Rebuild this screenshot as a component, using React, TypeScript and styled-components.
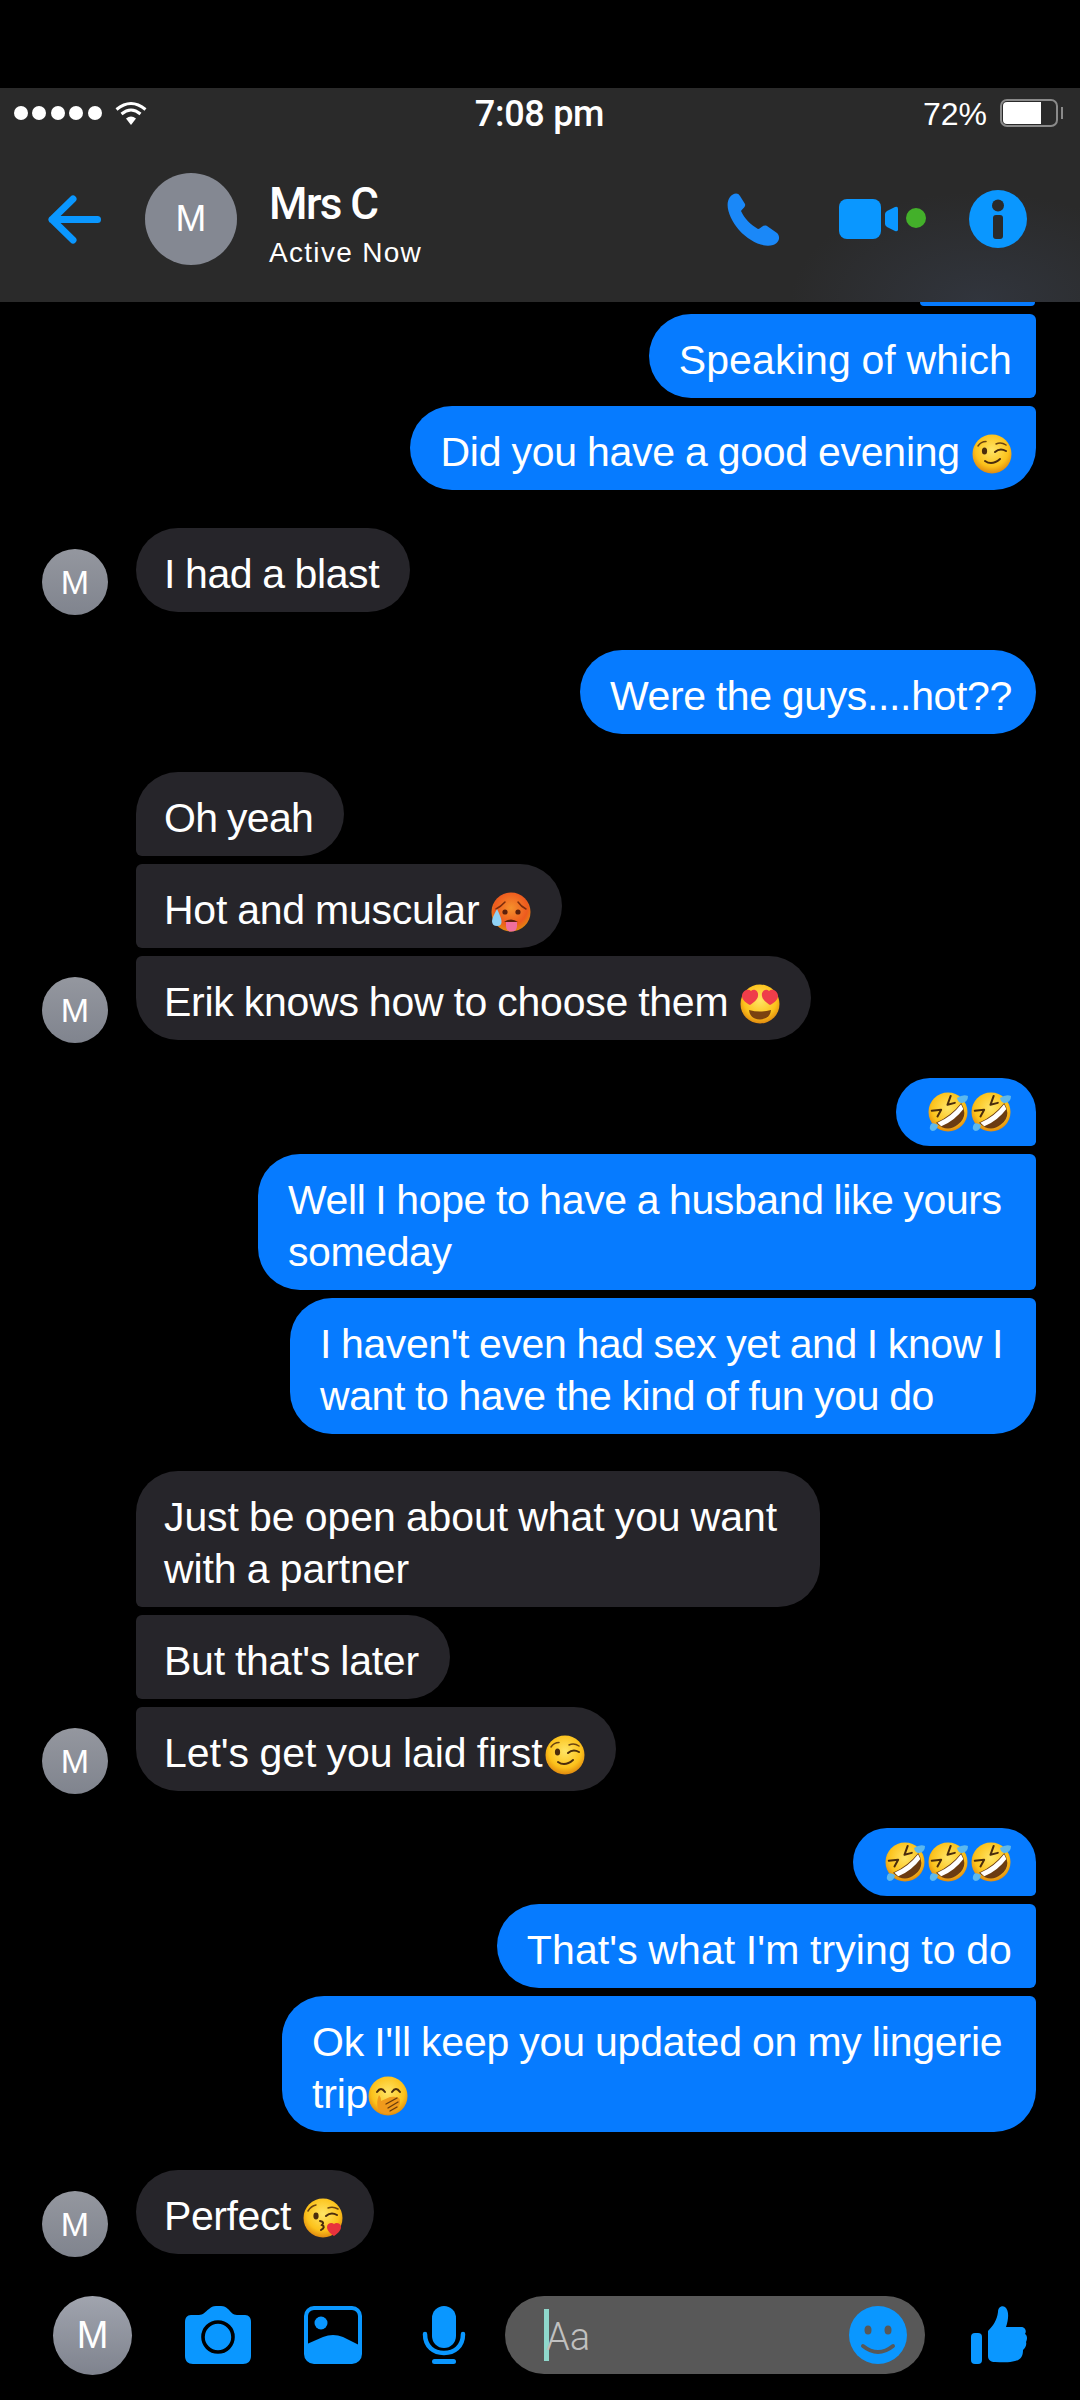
import React from "react";
import styled, { createGlobalStyle } from "styled-components";

const BLUE = "#0a97ff";
const HEADER_BG = "#2a2a2a";
const BUBBLE_BLUE = "#067bff";

const GlobalStyle = createGlobalStyle`
  html, body {
    margin: 0;
    padding: 0;
    background: #000;
  }
  * {
    box-sizing: border-box;
  }
`;

const Screen = styled.div`
  width: 1080px;
  height: 2400px;
  display: flex;
  flex-direction: column;
  padding-top: 88px;
  overflow: hidden;
  background: #000;
  color: #fff;
  font-family: "Liberation Sans", Arial, sans-serif;
`;

const Header = styled.header`
  height: 214px;
  flex: none;
  background: radial-gradient(ellipse 190px 110px at 980px 214px, #31353d 0%, ${HEADER_BG} 100%);
`;

const StatusBar = styled.div`
  height: 50px;
  display: grid;
  grid-template-columns: 1fr auto 1fr;
  align-items: center;
  padding: 0 17px 0 14px;
`;

const Signal = styled.div`
  display: flex;
  align-items: center;
`;

const SignalDot = styled.span`
  width: 14px;
  height: 14px;
  margin-right: 4.4px;
  border-radius: 50%;
  background: #fff;
`;

const WifiIcon = styled.svg`
  width: 32px;
  height: 24px;
  margin-left: 9px;
`;

const Clock = styled.span`
  padding-top: 2px;
  padding-left: 2px;
  font-family: Roboto, sans-serif;
  font-size: 36px;
  font-weight: 500;
  letter-spacing: -0.3px;
`;

const BatteryGroup = styled.div`
  display: flex;
  align-items: center;
  justify-content: flex-end;
`;

const BatteryText = styled.span`
  padding-top: 2px;
  font-size: 32px;
  margin-right: 13px;
`;

const Battery = styled.div`
  width: 58px;
  height: 28px;
  padding: 1px;
  border: 2px solid #8a8a8a;
  border-radius: 7px;
`;

const BatteryFill = styled.div`
  width: 38px;
  height: 100%;
  border-radius: 4px 0 0 4px;
  background: #fff;
`;

const BatteryNub = styled.div`
  width: 2px;
  height: 12px;
  margin-left: 3px;
  background: #8a8a8a;
`;

const NavBar = styled.div`
  height: 164px;
  display: flex;
  align-items: center;
  padding: 0 53px 2px 48px;
`;

const BackIcon = styled.svg`
  width: 53px;
  height: 49px;
  margin-right: 44px;
`;

const Avatar = styled.div<{ $size: number; $font: number }>`
  width: ${(p) => p.$size}px;
  height: ${(p) => p.$size}px;
  flex: none;
  display: flex;
  align-items: center;
  justify-content: center;
  border-radius: 50%;
  background: linear-gradient(#a0a4ae, #7f838e);
  font-size: ${(p) => p.$font}px;
  color: #fff;
`;

const HeaderAvatar = styled(Avatar)`
  background: #848892;
  margin-right: 32px;
`;

const Contact = styled.div`
  display: flex;
  flex-direction: column;
  padding-top: 9px;
`;

const ContactName = styled.div`
  font-family: Roboto, sans-serif;
  font-size: 44px;
  font-weight: 500;
  line-height: 50px;
  letter-spacing: -1.6px;
`;

const ContactStatus = styled.div`
  margin-top: 8px;
  font-size: 28px;
  line-height: 32px;
  letter-spacing: 1.3px;
`;

const NavActions = styled.div`
  margin-left: auto;
  display: flex;
  align-items: center;
`;

const PhoneIcon = styled.svg`
  width: 53px;
  height: 53px;
  margin-right: 59px;
`;

const VideoIcon = styled.svg`
  width: 87px;
  height: 40px;
  margin-right: 43px;
`;

const InfoIcon = styled.svg`
  width: 58px;
  height: 58px;
`;

const Thread = styled.main`
  flex: 1;
  display: flex;
  flex-direction: column;
`;

const ClippedBubble = styled.div`
  width: 115px;
  height: 4px;
  margin: 0 45px 8px auto;
  border-radius: 0 0 8px 8px;
  background: ${BUBBLE_BLUE};
`;

const OutgoingGroup = styled.section<{ $tight?: boolean }>`
  display: flex;
  flex-direction: column;
  align-items: flex-end;
  gap: 8px;
  padding-right: 44px;
  margin-bottom: ${(p) => (p.$tight ? "37px" : "38px")};
`;

const IncomingGroup = styled.section<{ $tight?: boolean }>`
  display: flex;
  flex-direction: column;
  align-items: flex-start;
  gap: 8px;
  padding-left: 136px;
  margin-bottom: ${(p) => (p.$tight ? "37px" : "38px")};
`;

const IncomingRow = styled.div`
  display: flex;
  align-items: flex-end;
  gap: 28px;
  margin-left: -94px;
`;

const RowAvatar = styled(Avatar)`
  margin-bottom: -3px;
  background: linear-gradient(#94979f, #80848e);
`;

type Corners = { $tr?: boolean; $br?: boolean; $tl?: boolean; $bl?: boolean };

const Bubble = styled.div<Corners & { $width?: number; $tracking?: number }>`
  width: ${(p) => (p.$width ? `${p.$width}px` : "auto")};
  padding-top: 19.5px;
  padding-bottom: 12.5px;
  font-size: 41px;
  line-height: 52px;
  letter-spacing: ${(p) => p.$tracking ?? -0.25}px;
  word-spacing: -1px;
  white-space: nowrap;
  border-radius: ${(p) => (p.$tl ? "6px" : "42px")} ${(p) => (p.$tr ? "6px" : "42px")}
    ${(p) => (p.$br ? "6px" : "42px")} ${(p) => (p.$bl ? "6px" : "42px")};
`;

const OutBubble = styled(Bubble)`
  padding-left: 30px;
  padding-right: 24px;
  background: ${BUBBLE_BLUE};
`;

const InBubble = styled(Bubble)`
  padding-left: 28px;
  padding-right: 31px;
  background: #26252a;
`;

const EmojiBubble = styled(OutBubble)`
  display: flex;
  gap: 3px;
  padding: 14px 25px 14px 32px;
`;

const EmojiSvg = styled.svg<{ $near?: boolean }>`
  width: 40px;
  height: 40px;
  display: inline-block;
  vertical-align: -8px;
  margin-left: ${(p) => (p.$near ? "0" : "2px")};
`;

const Composer = styled.footer`
  height: 104px;
  flex: none;
  display: flex;
  align-items: flex-start;
  padding-left: 53px;
`;

const ComposerIcon = styled.svg<{ $left: number; $w: number }>`
  width: ${(p) => p.$w}px;
  height: 58px;
  margin-left: ${(p) => p.$left}px;
  margin-top: 10px;
  flex: none;
`;

const InputPill = styled.div`
  width: 420px;
  height: 78px;
  margin-left: 39px;
  display: flex;
  align-items: center;
  justify-content: space-between;
  padding: 0 18px 0 39px;
  border-radius: 39px;
  background: #585858;
`;

const InputText = styled.div`
  display: flex;
  align-items: center;
`;

const Caret = styled.span`
  width: 5px;
  height: 52px;
  margin-right: -3px;
  background: #8fd8cc;
`;

const Placeholder = styled.span`
  margin-top: 4px;
  font-family: Roboto, sans-serif;
  font-size: 38px;
  font-weight: 300;
  color: #c0c0c0;
`;

const SmileIcon = styled.svg`
  width: 58px;
  height: 58px;
`;

const FaceGradient = ({ id, inner, outer }: { id: string; inner: string; outer: string }) => (
  <defs>
    <radialGradient id={id} cx="50%" cy="40%" r="60%">
      <stop offset="0%" stopColor={inner} />
      <stop offset="70%" stopColor={outer} />
      <stop offset="100%" stopColor="#e08a10" />
    </radialGradient>
  </defs>
);

const YellowFace = () => (
  <>
    <FaceGradient id="faceYellow" inner="#ffe566" outer="#fcc21b" />
    <circle cx="20" cy="20" r="19.5" fill="url(#faceYellow)" />
  </>
);

const WinkEmoji = () => (
  <EmojiSvg viewBox="0 0 40 40">
    <YellowFace />
    <ellipse cx="12.5" cy="17" rx="2.6" ry="3.6" fill="#4a2c0c" />
    <path d="M6 12 Q9 7.5 14 7.5" stroke="#6b4410" strokeWidth="1.5" fill="none" strokeLinecap="round" />
    <path d="M24 10 Q29 7.5 34 11" stroke="#6b4410" strokeWidth="1.5" fill="none" strokeLinecap="round" />
    <path d="M23 18 Q28 13.5 34 17" stroke="#4a2c0c" strokeWidth="2" fill="none" strokeLinecap="round" />
    <path d="M13 27 Q20 32 28 25" stroke="#4a2c0c" strokeWidth="2" fill="none" strokeLinecap="round" />
  </EmojiSvg>
);

const HotEmoji = () => (
  <EmojiSvg viewBox="0 0 40 40">
    <FaceGradient id="faceHot" inner="#f5912c" outer="#ee5a1e" />
    <circle cx="20" cy="20" r="19.5" fill="url(#faceHot)" />
    <circle cx="14" cy="20" r="2.6" fill="#5c200c" />
    <circle cx="27" cy="20" r="2.6" fill="#5c200c" />
    <path d="M5 17 Q10 14.5 14 10" stroke="#7a2c0c" strokeWidth="1.5" fill="none" strokeLinecap="round" />
    <path d="M27 10 Q30 14.5 35 17" stroke="#7a2c0c" strokeWidth="1.5" fill="none" strokeLinecap="round" />
    <path d="M13 30 Q20 25 27 30 Z" fill="#5c200c" />
    <path d="M15 30 H26 V34 Q26 39.5 20.5 39.5 Q15 39.5 15 34 Z" fill="#f06e9c" />
    <path d="M6 17 Q1 26 1 29 Q1 34 6 34 Q11 34 10.5 29 Q10 25 6 17 Z" fill="#8fd2f5" />
  </EmojiSvg>
);

const HeartPath = ({ d }: { d: string }) => <path d={d} fill="#ef3d4a" />;

const HeartEyesEmoji = () => (
  <EmojiSvg viewBox="0 0 40 40">
    <YellowFace />
    <HeartPath d="M11 7 C14 4 19 7 18 12 C17.5 16 13 19 10 21 C6 19 2 16 2 12 C2 7 8 4 11 7 Z" />
    <HeartPath d="M29 7 C32 4 38 7 38 12 C38 16 34 19 30 21 C27 19 22.5 16 22 12 C21 7 26 4 29 7 Z" />
    <path d="M9 26 Q20 29 31 26 Q30 35 20 35.5 Q10 35 9 26 Z" fill="#7a4210" />
  </EmojiSvg>
);

const RoflEmoji = () => (
  <EmojiSvg $near viewBox="0 0 40 40">
    <YellowFace />
    <g transform="rotate(-38 20 20)">
      <path d="M8 9 L16 14 L9 17" stroke="#4a2c0c" strokeWidth="2" fill="none" strokeLinecap="round" strokeLinejoin="round" />
      <path d="M32 9 L24 14 L31 17" stroke="#4a2c0c" strokeWidth="2" fill="none" strokeLinecap="round" strokeLinejoin="round" />
      <path d="M4 21 Q20 25 36 21 Q34 36 20 36 Q6 36 4 21 Z" fill="#6b3c12" />
      <path d="M5 22 Q20 26 35 22 L34 27 Q20 31 6 27 Z" fill="#fff" />
    </g>
    <path d="M29 6 Q35 2 40 4 Q40 10 34 11 Q30 11 29 6 Z" fill="#5cb8ee" />
    <path d="M10 33 Q5 30 3 32 Q0 37 4 39 Q9 39 10 33 Z" fill="#5cb8ee" />
  </EmojiSvg>
);

const HandOverMouthEmoji = () => (
  <EmojiSvg $near viewBox="0 0 40 40">
    <YellowFace />
    <path d="M9 16 Q13 10 17 16" stroke="#4a2c0c" strokeWidth="2" fill="none" strokeLinecap="round" />
    <path d="M24 16 Q28 10 32 16" stroke="#4a2c0c" strokeWidth="2" fill="none" strokeLinecap="round" />
    <path d="M11 19 Q13 21 13 25 L22 21 Q31 20 32 24 Q33 32 24 37 Q14 40 10 33 Q8 26 11 19 Z" fill="#f09a1c" />
    <path d="M18 28 L29 22 M20 32 L30 26 M22 35 L29 31" stroke="#6b3c0c" strokeWidth="1.4" strokeLinecap="round" />
  </EmojiSvg>
);

const KissEmoji = () => (
  <EmojiSvg viewBox="0 0 40 40">
    <YellowFace />
    <ellipse cx="13" cy="18" rx="2.6" ry="3.4" fill="#4a2c0c" />
    <path d="M5 13 Q8 8 13 7" stroke="#6b4410" strokeWidth="1.5" fill="none" strokeLinecap="round" />
    <path d="M25 10 Q30 8 35 11" stroke="#6b4410" strokeWidth="1.5" fill="none" strokeLinecap="round" />
    <path d="M23 18 Q28 13.5 34 17" stroke="#4a2c0c" strokeWidth="2" fill="none" strokeLinecap="round" />
    <path d="M17 23 Q22 24 19 27 Q23 29 18 32" stroke="#4a2c0c" strokeWidth="2" fill="none" strokeLinecap="round" />
    <path d="M31 26 C33 24 38 25 38 29 C38 33 34 36 31 38 C28 36 24 33 24 29 C24 25 29 24 31 26 Z" fill="#e8323c" />
  </EmojiSvg>
);

const Wifi = () => (
  <WifiIcon viewBox="0 0 32 24">
    <path d="M1.5 8.5 Q16 -3.5 30.5 8.5" stroke="#fff" strokeWidth="3" fill="none" />
    <path d="M6.5 13 Q16 5 25.5 13" stroke="#fff" strokeWidth="3" fill="none" />
    <path d="M11 17.5 Q16 13.5 21 17.5 L16 24 Z" fill="#fff" />
  </WifiIcon>
);

const Composed = () => (
  <Composer>
    <Avatar $size={79} $font={38}>
      M
    </Avatar>
    <ComposerIcon $left={53} $w={66} viewBox="0 0 66 58">
      <path
        d="M6 9 H14 C18 9 20 6 24 3 C26 1 28 0 31 0 H36 C39 0 41 1 43 3 C46 6 48 9 52 9 H60 C64 9 66 12 66 16 V50 C66 55 63 58 58 58 H8 C3 58 0 55 0 50 V16 C0 12 2 9 6 9 Z"
        fill={BLUE}
      />
      <circle cx="33" cy="31" r="15" fill={BLUE} stroke="#000" strokeWidth="3.6" />
    </ComposerIcon>
    <ComposerIcon $left={53} $w={58} viewBox="0 0 58 58">
      <rect x="2" y="2" width="54" height="54" rx="8" fill="none" stroke={BLUE} strokeWidth="4" />
      <path d="M3 38 L19 31 Q29 27 39 31 L55 39 V50 Q55 56 49 56 H9 Q3 56 3 50 Z" fill={BLUE} />
      <circle cx="17" cy="17" r="6.5" fill={BLUE} />
    </ComposerIcon>
    <ComposerIcon $left={60} $w={44} viewBox="0 0 44 58">
      <rect x="10" y="0" width="24" height="42" rx="12" fill={BLUE} />
      <path d="M3 28 C3 41 12 47 22 47 C32 47 41 41 41 28" fill="none" stroke={BLUE} strokeWidth="4.5" strokeLinecap="round" />
      <rect x="10" y="53" width="24" height="5" rx="2.5" fill={BLUE} />
    </ComposerIcon>
    <InputPill>
      <InputText>
        <Caret />
        <Placeholder>Aa</Placeholder>
      </InputText>
      <SmileIcon viewBox="0 0 58 58">
        <circle cx="29" cy="29" r="29" fill={BLUE} />
        <ellipse cx="19" cy="24" rx="3.5" ry="4.5" fill="#585858" />
        <ellipse cx="39" cy="24" rx="3.5" ry="4.5" fill="#585858" />
        <path d="M14 40 Q29 52 44 40" fill="none" stroke="#585858" strokeWidth="4" strokeLinecap="round" />
      </SmileIcon>
    </InputPill>
    <ComposerIcon $left={46} $w={57} viewBox="0 0 57 58">
      <rect x="0" y="27" width="11" height="31" rx="4" fill={BLUE} />
      <path
        d="M17 25 C22 20 26 14 27 6 C27 1 31 -1 34 1 C38 4 38 12 35 21 H50 C54 21 56 25 54 28 C57 30 56 34 55 36 C56 39 54 42 52 44 C52 50 50 54 44 55 C38 57 30 56 24 56 C20 56 17 54 17 50 Z"
        fill={BLUE}
      />
    </ComposerIcon>
  </Composer>
);

export default function App() {
  return (
    <Screen>
      <GlobalStyle />
      <Header>
        <StatusBar>
          <Signal>
            {[0, 1, 2, 3, 4].map((i) => (
              <SignalDot key={i} />
            ))}
            <Wifi />
          </Signal>
          <Clock>7:08 pm</Clock>
          <BatteryGroup>
            <BatteryText>72%</BatteryText>
            <Battery>
              <BatteryFill />
            </Battery>
            <BatteryNub />
          </BatteryGroup>
        </StatusBar>
        <NavBar>
          <BackIcon viewBox="0 0 53 49">
            <path
              d="M49.5 24.5 H4 M25 4 L4 24.5 L25 45"
              fill="none"
              stroke={BLUE}
              strokeWidth="7"
              strokeLinecap="round"
              strokeLinejoin="round"
            />
          </BackIcon>
          <HeaderAvatar $size={92} $font={37}>
            M
          </HeaderAvatar>
          <Contact>
            <ContactName>Mrs C</ContactName>
            <ContactStatus>Active Now</ContactStatus>
          </Contact>
          <NavActions>
            <PhoneIcon viewBox="0 0 53 53">
              <path
                d="M3 4 C6 0 11 -1 13 3 L18 11 C19 14 15 16 14 18 C17 25 24 32 31 36 C33 36 36 31 40 33 L50 40 C54 44 52 50 46 52 C36 55 22 48 12 37 C3 26 -3 12 3 4 Z"
                fill="#1a88f8"
              />
            </PhoneIcon>
            <VideoIcon viewBox="0 0 87 40">
              <rect x="0" y="0" width="42" height="40" rx="8" fill={BLUE} />
              <path d="M46 15 Q46 13.5 48 12 L56 8 Q59 7 59 9.5 V30.5 Q59 33 56 32 L48 28 Q46 26.5 46 25 Z" fill={BLUE} />
              <circle cx="77" cy="19" r="10" fill="#43b02a" />
            </VideoIcon>
            <InfoIcon viewBox="0 0 58 58">
              <circle cx="29" cy="29" r="29" fill={BLUE} />
              <circle cx="29" cy="15.5" r="6" fill={HEADER_BG} />
              <rect x="24" y="25" width="10" height="24" rx="3" fill={HEADER_BG} />
            </InfoIcon>
          </NavActions>
        </NavBar>
      </Header>

      <Thread>
        <ClippedBubble />
        <OutgoingGroup>
          <OutBubble $tr $br $tracking={0.15}>
            Speaking of which
          </OutBubble>
          <OutBubble $tr>
            Did you have a good evening <WinkEmoji />
          </OutBubble>
        </OutgoingGroup>

        <IncomingGroup>
          <IncomingRow>
            <RowAvatar $size={66} $font={34}>
              M
            </RowAvatar>
            <InBubble $tracking={-0.4}>I had a blast</InBubble>
          </IncomingRow>
        </IncomingGroup>

        <OutgoingGroup>
          <OutBubble $tracking={-0.35}>Were the guys....hot??</OutBubble>
        </OutgoingGroup>

        <IncomingGroup>
          <InBubble $bl $tracking={-0.7}>
            Oh yeah
          </InBubble>
          <InBubble $tl $bl>
            Hot and muscular <HotEmoji />
          </InBubble>
          <IncomingRow>
            <RowAvatar $size={66} $font={34}>
              M
            </RowAvatar>
            <InBubble $tl>
              Erik knows how to choose them <HeartEyesEmoji />
            </InBubble>
          </IncomingRow>
        </IncomingGroup>

        <OutgoingGroup $tight>
          <EmojiBubble $br>
            <RoflEmoji />
            <RoflEmoji />
          </EmojiBubble>
          <OutBubble $tr $br $width={778} $tracking={-0.4}>
            Well I hope to have a husband like yours
            <br />
            someday
          </OutBubble>
          <OutBubble $tr $width={746} $tracking={-0.4}>
            I haven't even had sex yet and I know I
            <br />
            want to have the kind of fun you do
          </OutBubble>
        </OutgoingGroup>

        <IncomingGroup $tight>
          <InBubble $bl $width={684} $tracking={-0.1}>
            Just be open about what you want
            <br />
            with a partner
          </InBubble>
          <InBubble $tl $bl>
            But that's later
          </InBubble>
          <IncomingRow>
            <RowAvatar $size={66} $font={34}>
              M
            </RowAvatar>
            <InBubble $tl $tracking={-0.05}>
              Let's get you laid first
              <WinkEmoji />
            </InBubble>
          </IncomingRow>
        </IncomingGroup>

        <OutgoingGroup>
          <EmojiBubble $br>
            <RoflEmoji />
            <RoflEmoji />
            <RoflEmoji />
          </EmojiBubble>
          <OutBubble $tr $br $tracking={0.1}>
            That's what I'm trying to do
          </OutBubble>
          <OutBubble $tr $width={754} $tracking={-0.2}>
            Ok I'll keep you updated on my lingerie
            <br />
            trip
            <HandOverMouthEmoji />
          </OutBubble>
        </OutgoingGroup>

        <IncomingGroup>
          <IncomingRow>
            <RowAvatar $size={66} $font={34}>
              M
            </RowAvatar>
            <InBubble $tracking={-0.4}>
              Perfect <KissEmoji />
            </InBubble>
          </IncomingRow>
        </IncomingGroup>
      </Thread>

      <Composed />
    </Screen>
  );
}
